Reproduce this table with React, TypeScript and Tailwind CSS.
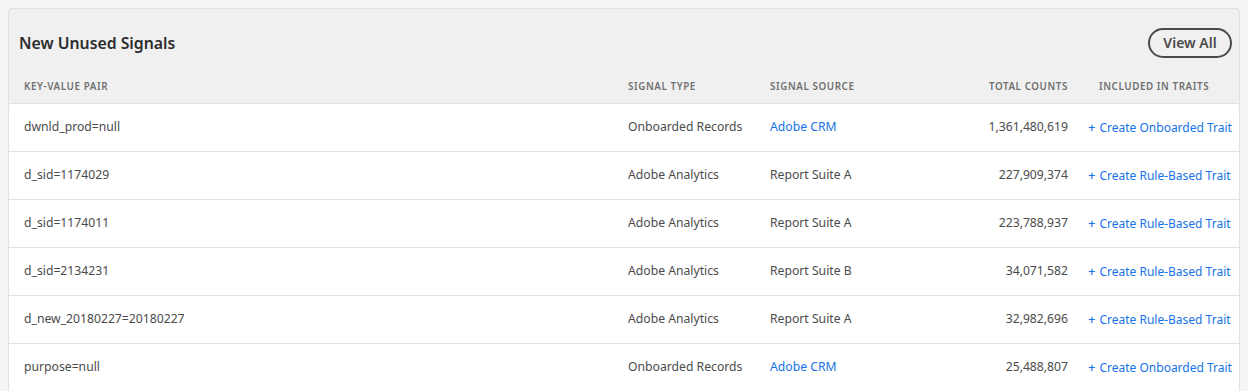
const ROWS = [
  { key: 'dwnld_prod=null', type: 'Onboarded Records', source: 'Adobe CRM', link: true, count: '1,361,480,619', action: 'Create Onboarded Trait' },
  { key: 'd_sid=1174029', type: 'Adobe Analytics', source: 'Report Suite A', link: false, count: '227,909,374', action: 'Create Rule-Based Trait' },
  { key: 'd_sid=1174011', type: 'Adobe Analytics', source: 'Report Suite A', link: false, count: '223,788,937', action: 'Create Rule-Based Trait' },
  { key: 'd_sid=2134231', type: 'Adobe Analytics', source: 'Report Suite B', link: false, count: '34,071,582', action: 'Create Rule-Based Trait' },
  { key: 'd_new_20180227=20180227', type: 'Adobe Analytics', source: 'Report Suite A', link: false, count: '32,982,696', action: 'Create Rule-Based Trait' },
  { key: 'purpose=null', type: 'Onboarded Records', source: 'Adobe CRM', link: true, count: '25,488,807', action: 'Create Onboarded Trait' },
];

export default function App() {
  return (
    <div className="min-h-[391px] bg-[#f5f5f5] pt-2 px-2 font-['Noto_Sans',sans-serif]">
      <div className="bg-[#f0f0f0] border border-[#e1e1e1] rounded-[4px] overflow-hidden">
        <div className="flex items-center justify-between pl-[10px] pr-[7px] pt-[19px] pb-[14px]">
          <h1 className="text-[15.8px] font-semibold text-[#2c2c2c] leading-none pt-[2px]">New Unused Signals</h1>
          <button className="h-[30px] w-[84px] rounded-full border-2 border-[#4b4b4b] text-[14px] font-semibold text-[#4b4b4b] leading-none">
            View All
          </button>
        </div>

        <div className="grid grid-cols-[604px_142px_170px_128px_1fr] items-center h-[31px] pl-[15px] text-[9.8px] font-semibold tracking-[0.06em] uppercase text-[#707070]">
          <div>Key-Value Pair</div>
          <div>Signal Type</div>
          <div>Signal Source</div>
          <div className="text-right">Total Counts</div>
          <div className="pl-[31px]">Included in Traits</div>
        </div>

        <div className="bg-white border-t border-[#e1e1e1] rounded-t-[3px]">
          {ROWS.map((r, i) => (
            <div
              key={i}
              className="grid grid-cols-[604px_142px_170px_128px_1fr] items-center h-[48px] pl-[15px] border-b border-[#e1e1e1] text-[12.2px] text-[#4b4b4b]"
            >
              <div>{r.key}</div>
              <div>{r.type}</div>
              <div className={r.link ? 'text-[#1473e6]' : ''}>{r.source}</div>
              <div className="text-right">{r.count}</div>
              <div className="pl-[20px] text-[12px] text-[#1473e6] whitespace-nowrap">
                <span className="mr-[4px] text-[13px] font-medium">+</span>
                {r.action}
              </div>
            </div>
          ))}
        </div>
      </div>
    </div>
  );
}
